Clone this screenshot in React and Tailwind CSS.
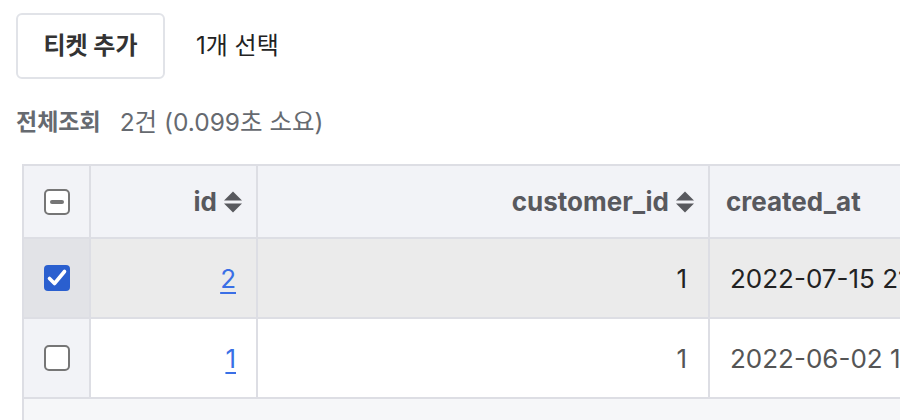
const rows = [
  { id: 2, customerId: 1, createdAt: '2022-07-15 21:04:11', selected: true },
  { id: 1, customerId: 1, createdAt: '2022-06-02 11:32:45', selected: false },
]

const font = { fontFamily: 'Inter, "Noto Sans CJK KR", sans-serif' }

export default function App() {
  return (
    <div className="w-[900px] h-[420px] overflow-hidden bg-white" style={font}>
      <div className="pl-4 pt-[13px] flex items-center gap-[31px]">
        <button className="w-[149px] h-[66px] rounded-md border-2 border-[#e1e3e8] bg-white text-[24px] font-bold text-[#333]">
          티켓 추가
        </button>
        <span className="text-[24px] text-[#222]">1개 선택</span>
      </div>

      <div className="pl-4 mt-[27px] h-[32px] flex items-center gap-[19px] text-[23px] text-[#666a70]">
        <span className="font-bold">전체조회</span>
        <span className="text-[24.5px]">2건 (0.099초 소요)</span>
      </div>

      <div className="ml-[22px] mt-[26px] w-[1000px] border-l-2 border-t-2 border-[#dddee4]">
        {/* header */}
        <div className="flex h-[73px] bg-[#f2f3f7]">
          <div className="w-[67px] shrink-0 border-r-2 border-b-2 border-[#dddee4] flex items-center justify-center">
            <Checkbox state="mixed" />
          </div>
          <HeaderCell width="w-[167px]" label="id" sortable />
          <HeaderCell width="w-[452px]" label="customer_id" sortable />
          <div className="flex-1 border-r-2 border-b-2 border-[#dddee4] flex items-center pl-4 text-[26px] font-bold text-[#58595e]">
            created_at
          </div>
        </div>

        {rows.map((r) => (
          <div key={r.id} className={`flex h-[80px] ${r.selected ? 'bg-[#ebebeb] text-[#222]' : 'bg-white text-[#555]'}`}>
            <div
              className={`w-[67px] shrink-0 border-r-2 border-b-2 border-[#dddee4] flex items-center justify-center ${
                r.selected ? 'bg-[#e2e3e7]' : 'bg-[#f2f3f7]'
              }`}
            >
              <Checkbox state={r.selected ? 'checked' : 'off'} />
            </div>
            <div className="w-[167px] shrink-0 border-r-2 border-b-2 border-[#dddee4] flex items-center justify-end pr-[20px] text-[26px]">
              <a className="text-[#3a6fe6] underline underline-offset-4">{r.id}</a>
            </div>
            <div className="w-[452px] shrink-0 border-r-2 border-b-2 border-[#dddee4] flex items-center justify-end pr-[21px] text-[26px]">
              {r.customerId}
            </div>
            <div className="flex-1 border-r-2 border-b-2 border-[#dddee4] flex items-center pl-[20px] text-[26px] whitespace-nowrap">
              {r.createdAt}
            </div>
          </div>
        ))}

        <div className="h-[40px] bg-[#f6f7f9]" />
      </div>
    </div>
  )
}

function HeaderCell({ width, label, sortable }) {
  return (
    <div
      className={`${width} shrink-0 border-r-2 border-b-2 border-[#dddee4] flex items-center justify-end gap-[6px] pr-[13px] text-[26px] font-bold text-[#58595e]`}
    >
      {label}
      {sortable && <SortIcon />}
    </div>
  )
}

function SortIcon() {
  return (
    <svg width="20" height="24" viewBox="0 0 20 24" fill="#58595e">
      <path d="M10 1.5 L19 10.5 L1 10.5 Z" />
      <path d="M1 13.5 L19 13.5 L10 22.5 Z" />
    </svg>
  )
}

function Checkbox({ state }) {
  if (state === 'checked') {
    return (
      <div className="w-[26px] h-[26px] rounded-[4px] bg-[#2a5fcf] flex items-center justify-center">
        <svg width="26" height="26" viewBox="0 0 26 26" fill="none">
          <path d="M5.5 13.5 L10.5 18.5 L20.5 6.5" stroke="white" strokeWidth="3.6" strokeLinecap="round" strokeLinejoin="round" />
        </svg>
      </div>
    )
  }
  return (
    <div className="w-[26px] h-[26px] rounded-[5px] border-2 border-[#767676] bg-white flex items-center justify-center">
      {state === 'mixed' && <div className="w-[14px] h-[4px] rounded-full bg-[#767676]" />}
    </div>
  )
}
